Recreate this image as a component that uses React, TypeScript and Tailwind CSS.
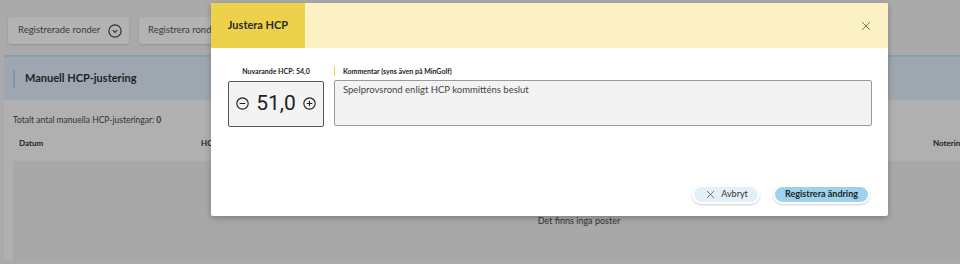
import { X } from "lucide-react";

function CircleIcon({ kind }: { kind: "minus" | "plus" | "chevron" }) {
  return (
    <svg viewBox="0 0 16 16" className="h-full w-full" fill="none" stroke="currentColor" strokeWidth="1.4">
      <circle cx="8" cy="8" r="7" />
      {kind === "minus" && <path d="M4.5 8h7" />}
      {kind === "plus" && <path d="M4.5 8h7M8 4.5v7" />}
      {kind === "chevron" && <path d="M5.5 7l2.5 2.5L10.5 7" />}
    </svg>
  );
}

export default function App() {
  return (
    <div className="relative h-[264px] w-[960px] overflow-hidden bg-[#aaaaaa] font-['Lato',sans-serif] text-[#222]">
      {/* page behind the dimmed backdrop */}
      <div className="flex gap-[10px] px-2 pt-[17px]">
        <div className="flex h-[27px] w-[121px] items-center justify-between rounded-[3px] bg-[#b3b3b3] pl-[10px] pr-[7px] text-[9.5px] text-[#3a3a3a] shadow-[0_1px_2px_rgba(0,0,0,0.15)]">
          Registrerade ronder
          <span className="h-[14px] w-[14px] text-[#333]">
            <CircleIcon kind="chevron" />
          </span>
        </div>
        <div className="flex h-[27px] w-[120px] items-center rounded-[3px] bg-[#b3b3b3] pl-[9px] text-[9.5px] text-[#3a3a3a] shadow-[0_1px_2px_rgba(0,0,0,0.15)]">
          Registrera rond
        </div>
      </div>

      <div className="ml-1 mt-[11px] w-[1141px] border-t-2 border-[#8a9fae] bg-[#b0b0b0]">
        <div className="flex h-[43px] items-center bg-[#9ea7af] pl-[9px]">
          <span className="mr-[10px] h-[18px] w-[2px] bg-[#7e98ad]" />
          <h1 className="text-[11px] font-bold text-[#222]">Manuell HCP-justering</h1>
        </div>
        <div className="px-[9px] pt-[14px] text-[8.5px] text-[#333]">
          Totalt antal manuella HCP-justeringar: <b>0</b>
        </div>
        <div className="relative mt-[10px] h-[20px] text-[8px] font-bold text-[#222]">
          <span className="absolute left-[15px]">Datum</span>
          <span className="absolute left-[197px]">HCP</span>
          <span className="absolute left-[929px]">Notering</span>
        </div>
        <div className="ml-[9px] mt-[4px] flex h-[100px] justify-center bg-[#a8a8a8] pt-[53px] text-[9px] text-[#333]">
          Det finns inga poster
        </div>
      </div>

      {/* modal */}
      <div className="absolute left-[211px] top-[3px] w-[677px] overflow-hidden rounded-[2px] bg-white shadow-[0_2px_6px_rgba(0,0,0,0.25)]">
        <div className="flex h-[45px] items-stretch bg-[#fcf1c4]">
          <div className="flex w-[94px] items-center justify-center bg-[#ecd14a] text-[11px] font-bold text-[#2b2b2b]">
            Justera HCP
          </div>
          <div className="flex-1" />
          <button className="mr-[15px] flex items-center text-[#333]">
            <X size={14} strokeWidth={1.2} />
          </button>
        </div>

        <div className="flex gap-[10px] pl-[17px] pr-[16px] pt-[18px]">
          <div className="flex w-[96px] flex-col items-center">
            <div className="mb-[4px] text-[7px] font-bold text-[#222]">Nuvarande HCP: 54,0</div>
            <div className="flex h-[46px] w-full items-center justify-between rounded-[2px] border border-[#555] bg-[#f3f3f3] px-[7px] text-[#222]">
              <span className="h-[13px] w-[13px]">
                <CircleIcon kind="minus" />
              </span>
              <span className="font-['Roboto',sans-serif] text-[21px]">51,0</span>
              <span className="h-[13px] w-[13px]">
                <CircleIcon kind="plus" />
              </span>
            </div>
          </div>
          <div className="flex flex-1 flex-col">
            <div className="mb-[4px] flex h-[10px] items-center border-l border-[#ecd14a] pl-[8px] text-[7px] font-bold text-[#222]">
              Kommentar (syns även på MinGolf)
            </div>
            <div className="h-[46px] rounded-[2px] border border-[#9a9a9a] bg-[#f3f3f3] px-[8px] pt-[2px] text-[9.5px] text-[#444]">
              Spelprovsrond enligt HCP kommitténs beslut
            </div>
          </div>
        </div>

        <div className="flex justify-end gap-[13px] pb-[12px] pr-[18px] pt-[58px]">
          <button className="flex h-[19px] w-[68px] items-center justify-center gap-[4px] rounded-full border-2 border-white bg-[#e3f0f8] text-[9px] text-[#333] shadow-[0_1px_2px_rgba(0,0,0,0.2)]">
            <X size={13} strokeWidth={1.2} />
            Avbryt
          </button>
          <button className="flex h-[19px] w-[97px] items-center justify-center rounded-full border-2 border-white bg-[#9dd2ee] text-[9px] font-bold text-[#222] shadow-[0_1px_2px_rgba(0,0,0,0.2)]">
            Registrera ändring
          </button>
        </div>
      </div>
    </div>
  );
}
